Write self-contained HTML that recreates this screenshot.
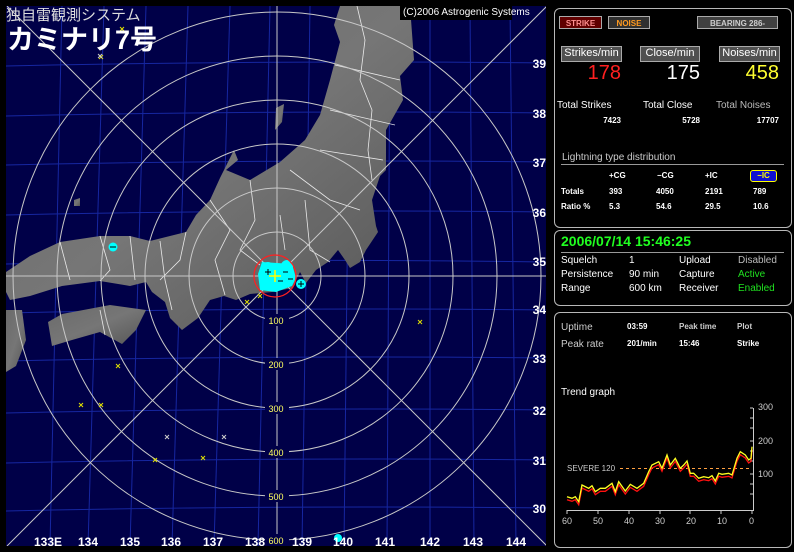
<!DOCTYPE html>
<html><head><meta charset="utf-8"><style>
*{margin:0;padding:0;box-sizing:border-box}
body{width:794px;height:552px;background:#000;position:relative;overflow:hidden;font-family:"Liberation Sans","Noto Sans CJK JP",sans-serif;color:#fff}
.a{position:absolute;white-space:nowrap}
.panel{position:absolute;border:1px solid #b8b8b8;border-radius:6px}
.btn{position:absolute;font-size:11px;text-align:center;line-height:13px;border:1px solid #aaa}
.s{font-size:10px}
.m{font-size:8px;font-weight:bold}
</style></head><body>
<svg class="a" style="left:0;top:0" width="552" height="552" viewBox="0 0 552 552">
<defs><clipPath id="c"><rect x="6" y="6" width="540" height="540"/></clipPath>
<linearGradient id="g" x1="0" y1="0" x2="1" y2="1"><stop offset="0" stop-color="#6a6a6a"/><stop offset="0.5" stop-color="#767676"/><stop offset="1" stop-color="#555"/></linearGradient></defs>
<rect x="6" y="6" width="540" height="540" fill="#000048"/>
<g clip-path="url(#c)">
<g stroke="#1626a0" stroke-width="1" fill="none">
<path d="M6 66 Q276 60 546 63"/><path d="M6 116 Q276 110 546 113"/><path d="M6 165 Q276 159 546 162"/><path d="M6 215 Q276 209 546 212"/><path d="M6 264 Q276 258 546 262"/><path d="M6 313 Q276 307 546 310"/><path d="M6 361 Q276 355 546 358"/><path d="M6 413 Q276 407 546 410"/><path d="M6 463 Q276 457 546 460"/><path d="M6 511 Q276 505 546 508"/>
<path d="M62 6 L50 546"/><path d="M104 6 L88 546"/><path d="M146 6 L130 546"/><path d="M188 6 L172 546"/><path d="M230 6 L214 546"/><path d="M270 6 L258 546"/><path d="M310 6 L302 546"/><path d="M350 6 L344 546"/><path d="M390 6 L387 546"/><path d="M430 6 L430 546"/><path d="M470 6 L474 546"/><path d="M510 6 L516 546"/>
</g>
<g fill="url(#g)">
<path d="M340 6 L410 6 L414 60 L400 76 L403 100 L386 130 L386 170 L380 176 L372 200 L376 226 L378 232 L366 250 L360 262 L350 268 L345 260 L338 250 L328 262 L316 270 L306 283 L300 272 L292 288 L272 292 L250 294 L236 300 L224 296 L210 300 L198 318 L182 330 L170 318 L165 302 L152 292 L146 282 L130 286 L100 281 L62 286 L30 296 L10 300 L6 292 L6 272 L30 256 L60 242 L100 236 L130 236 L150 241 L186 232 L196 215 L210 200 L220 178 L234 150 L238 160 L226 170 L250 180 L280 162 L305 140 L320 115 L330 80 L340 42 L334 25 Z"/>
<path d="M48 322 L62 314 L110 305 L146 310 L136 330 L122 344 L100 332 L72 340 L52 346 Z"/>
<path d="M6 310 L22 310 L26 340 L16 366 L6 372 Z"/>
<path d="M276 108 L284 104 L282 122 L275 130 Z"/>
<path d="M74 200 L80 198 L80 206 L74 206 Z"/>
</g>
<g stroke="#fff" stroke-width="0.8" fill="none" opacity="0.85">
<path d="M357 6 L365 40 L360 80 L372 110 L368 150 L372 180"/><path d="M335 65 L400 80"/><path d="M330 110 L395 125"/><path d="M320 150 L383 160"/><path d="M290 170 L330 200 L360 210"/><path d="M250 180 L255 220 L240 250 L260 265"/><path d="M210 200 L230 230 L215 260 L225 295"/><path d="M186 232 L180 260 L160 280"/><path d="M160 241 L165 280 L172 310"/><path d="M100 236 L110 270 L100 281"/><path d="M60 242 L70 280"/><path d="M305 200 L310 250 L330 262"/><path d="M280 215 L285 250"/><path d="M100 310 L105 335"/><path d="M130 236 L135 280"/></g>
<g stroke="#c8c8c8" stroke-width="1" fill="none">
<line x1="6" y1="276" x2="546" y2="276"/><line x1="277" y1="6" x2="277" y2="546"/>
<line x1="7" y1="546" x2="547" y2="6"/><line x1="7" y1="6" x2="547" y2="546"/>
<circle cx="277" cy="276" r="44"/><circle cx="277" cy="276" r="88"/><circle cx="277" cy="276" r="132"/><circle cx="277" cy="276" r="176"/><circle cx="277" cy="276" r="220"/><circle cx="277" cy="276" r="264"/>
</g>
<g fill="#000048"><rect x="265" y="314" width="24" height="12"/><rect x="265" y="358" width="24" height="12"/><rect x="265" y="402" width="24" height="12"/><rect x="265" y="446" width="24" height="12"/><rect x="265" y="490" width="24" height="12"/><rect x="265" y="534" width="24" height="12"/></g>
<g fill="#ffff60" font-size="9" font-family="Liberation Sans" text-anchor="middle"><text x="276" y="324">100</text><text x="276" y="368">200</text><text x="276" y="412">300</text><text x="276" y="456">400</text><text x="276" y="500">500</text><text x="276" y="544">600</text></g>
<path d="M262 262 L292 264 L296 278 L292 286 L276 292 L260 290 L258 274 Z" fill="#00ffff"/>
<circle cx="268" cy="268" r="6" fill="#00ffff"/><circle cx="287" cy="266" r="6" fill="#00ffff"/>
<circle cx="301" cy="284" r="5" fill="#00ffff"/><circle cx="113" cy="247" r="4.5" fill="#00ffff"/><circle cx="338" cy="538" r="4" fill="#00ffff"/>
<circle cx="275" cy="276" r="21" fill="none" stroke="#ff2020" stroke-width="1.2"/>
<g stroke="#000" stroke-width="1"><path d="M265 272 h6 M268 269 v6 M298 284 h6 M301 281 v6 M110 247 h6 M283 272 h5 M278 281 h5 M288 279 h5"/></g>
<path d="M269 276 h12 M275 270 v12" stroke="#ffff00" stroke-width="1.5"/>
<g stroke="#e0e000" stroke-width="1"><path d="M120 27 l4 4 m0 -4 l-4 4 M99 55 l4 4 m0 -4 l-4 4 M245 300 l4 4 m0 -4 l-4 4 M258 294 l4 4 m0 -4 l-4 4 M418 320 l4 4 m0 -4 l-4 4 M116 364 l4 4 m0 -4 l-4 4 M79 403 l4 4 m0 -4 l-4 4 M99 403 l4 4 m0 -4 l-4 4 M153 458 l4 4 m0 -4 l-4 4 M201 456 l4 4 m0 -4 l-4 4"/></g>
<g stroke="#ccc" stroke-width="1"><path d="M165 435 l4 4 m0 -4 l-4 4 M222 435 l4 4 m0 -4 l-4 4 M98 54 l4 4 m0 -4 l-4 4"/></g>
</g>
<g fill="#fff" font-size="12" font-weight="bold" font-family="Liberation Sans">
<text x="34" y="546">133E</text><text x="78" y="546">134</text><text x="120" y="546">135</text><text x="161" y="546">136</text><text x="203" y="546">137</text><text x="245" y="546">138</text><text x="292" y="546">139</text><text x="333" y="546">140</text><text x="375" y="546">141</text><text x="420" y="546">142</text><text x="463" y="546">143</text><text x="506" y="546">144</text>
<g text-anchor="end"><text x="546" y="68">39</text><text x="546" y="118">38</text><text x="546" y="167">37</text><text x="546" y="217">36</text><text x="546" y="266">35</text><text x="546" y="314">34</text><text x="546" y="363">33</text><text x="546" y="415">32</text><text x="546" y="465">31</text><text x="546" y="513">30</text></g>
</g>
</svg>
<div class="a" style="left:6px;top:4px;font-size:15px;color:#ddd;letter-spacing:0px">独自雷観測システム</div>
<div class="a" style="left:7px;top:18px;font-size:27px;font-weight:bold;color:#fff">カミナリ7号</div>
<div class="a" style="left:400px;top:6px;width:112px;height:14px;background:#000;font-size:10px;line-height:14px;padding-left:3px">(C)2006 Astrogenic Systems</div>

<div class="panel" style="left:554px;top:8px;width:238px;height:220px"></div>
<div class="btn m" style="left:559px;top:16px;width:43px;height:13px;background:#600000;color:#ff9090">STRIKE</div>
<div class="btn m" style="left:608px;top:16px;width:42px;height:13px;background:#303030;color:#ff9a20">NOISE</div>
<div class="btn m" style="left:697px;top:16px;width:81px;height:13px;background:#404040;color:#ccc">BEARING 286-</div>
<div class="btn" style="left:561px;top:46px;width:61px;height:16px;background:#505050">Strikes/min</div>
<div class="btn" style="left:640px;top:46px;width:60px;height:16px;background:#505050">Close/min</div>
<div class="btn" style="left:719px;top:46px;width:61px;height:16px;background:#505050">Noises/min</div>
<div class="a" style="left:561px;width:60px;top:62px;font-size:20px;color:#ff2020;text-align:right">178</div>
<div class="a" style="left:640px;width:60px;top:62px;font-size:20px;color:#fff;text-align:right">175</div>
<div class="a" style="left:719px;width:60px;top:62px;font-size:20px;color:#ffff30;text-align:right">458</div>
<div class="a s" style="left:557px;top:100px">Total Strikes</div>
<div class="a s" style="left:643px;top:100px">Total Close</div>
<div class="a s" style="left:716px;top:100px;color:#bbb">Total Noises</div>
<div class="a m" style="left:561px;width:60px;text-align:right;top:116px">7423</div>
<div class="a m" style="left:640px;width:60px;text-align:right;top:116px">5728</div>
<div class="a m" style="left:719px;width:60px;text-align:right;top:116px">17707</div>
<div class="a s" style="left:562px;top:152px;color:#ccc">Lightning type distribution</div>
<div class="a" style="left:561px;top:164px;width:223px;height:1px;background:#999"></div>
<div class="a m" style="left:609px;top:171px">+CG</div><div class="a m" style="left:657px;top:171px">−CG</div><div class="a m" style="left:705px;top:171px">+IC</div>
<div class="a m" style="left:750px;top:170px;width:27px;height:12px;background:#1010d0;border:1px solid #ff0;border-radius:3px;color:#ff0;text-align:center;line-height:10px">−IC</div>
<div class="a m" style="left:561px;top:187px">Totals</div><div class="a m" style="left:609px;top:187px">393</div><div class="a m" style="left:656px;top:187px">4050</div><div class="a m" style="left:705px;top:187px">2191</div><div class="a m" style="left:753px;top:187px">789</div>
<div class="a m" style="left:561px;top:202px">Ratio %</div><div class="a m" style="left:609px;top:202px">5.3</div><div class="a m" style="left:656px;top:202px">54.6</div><div class="a m" style="left:705px;top:202px">29.5</div><div class="a m" style="left:753px;top:202px">10.6</div>

<div class="panel" style="left:554px;top:230px;width:238px;height:76px"></div>
<div class="a" style="left:561px;top:233px;font-size:14px;font-weight:bold;color:#20ff20">2006/07/14 15:46:25</div>
<div class="a" style="left:561px;top:252px;width:223px;height:1px;background:#999"></div>
<div class="a s" style="left:561px;top:255px">Squelch</div><div class="a s" style="left:629px;top:255px">1</div><div class="a s" style="left:679px;top:255px">Upload</div><div class="a s" style="left:738px;top:255px;color:#bbb">Disabled</div>
<div class="a s" style="left:561px;top:269px">Persistence</div><div class="a s" style="left:629px;top:269px">90 min</div><div class="a s" style="left:679px;top:269px">Capture</div><div class="a s" style="left:738px;top:269px;color:#20e020">Active</div>
<div class="a s" style="left:561px;top:283px">Range</div><div class="a s" style="left:629px;top:283px">600 km</div><div class="a s" style="left:679px;top:283px">Receiver</div><div class="a s" style="left:738px;top:283px;color:#20e020">Enabled</div>

<div class="panel" style="left:554px;top:312px;width:238px;height:236px"></div>
<div class="a s" style="left:561px;top:322px;color:#ccc">Uptime</div><div class="a m" style="left:627px;top:322px">03:59</div><div class="a m" style="left:679px;top:322px;color:#ccc">Peak time</div><div class="a m" style="left:737px;top:322px;color:#ccc">Plot</div>
<div class="a s" style="left:561px;top:339px;color:#ccc">Peak rate</div><div class="a m" style="left:627px;top:339px">201/min</div><div class="a m" style="left:679px;top:339px">15:46</div><div class="a m" style="left:737px;top:339px">Strike</div>
<div class="a s" style="left:561px;top:387px">Trend graph</div>
<svg class="a" style="left:552px;top:395px" width="242" height="135" viewBox="552 395 242 135">
<g stroke="#ccc" stroke-width="1" fill="none">
<path d="M567 510.5 H753 M753.5 408 V511"/>
<path d="M567 510v4 M598 510v4 M629 510v4 M660 510v4 M690 510v4 M721 510v4 M752 510v4"/>
<path d="M753 408h-3 M753 418h-3 M753 428h-3 M753 441h-3 M753 451h-3 M753 461h-3 M753 474h-3 M753 484h-3 M753 494h-3"/>
</g>
<line x1="620" y1="468.5" x2="752" y2="468.5" stroke="#ffa040" stroke-dasharray="3,3"/>
<text x="567" y="471" font-size="8" fill="#ccc" font-family="Liberation Sans">SEVERE 120</text>
<polyline fill="none" stroke="#ff1010" stroke-width="1.3" transform="translate(0,3)" points="567,496.7 572,498.3 575.3,496.7 578.7,501.7 582,485 588.7,488.3 592,485.7 595.3,491.7 600.3,488.3 605.3,488.3 612,483.3 615.3,491.7 618.7,481.7 625.3,491 630.3,484.3 637,488.3 643.7,483.3 648.7,471.7 652,465 658.7,461.7 662,468.3 667,455 670.3,465 675.3,458.3 680.3,468.3 683.7,465 687,461 690.3,473.3 693.7,473.3 698.7,478.3 703.7,476.7 708.7,477.7 712,475.7 715.3,481 718.7,473.3 722,474.3 728.7,473.3 732,475 737,458.3 740.3,451.7 745.3,455 748.7,460 751,458.3 752,446.7"/>
<polyline fill="none" stroke="#ffff20" stroke-width="1.3" points="567,496.7 572,498.3 575.3,496.7 578.7,501.7 582,485 588.7,488.3 592,485.7 595.3,491.7 600.3,488.3 605.3,488.3 612,483.3 615.3,491.7 618.7,481.7 625.3,491 630.3,484.3 637,488.3 643.7,483.3 648.7,471.7 652,465 658.7,461.7 662,468.3 667,455 670.3,465 675.3,458.3 680.3,468.3 683.7,465 687,461 690.3,473.3 693.7,473.3 698.7,478.3 703.7,476.7 708.7,477.7 712,475.7 715.3,481 718.7,473.3 722,474.3 728.7,473.3 732,475 737,458.3 740.3,451.7 745.3,455 748.7,460 751,458.3 752,446.7"/>
<g fill="#ccc" font-size="9" font-family="Liberation Sans"><text x="758" y="410">300</text><text x="758" y="444">200</text><text x="758" y="477">100</text>
<text x="562" y="524">60</text><text x="593" y="524">50</text><text x="624" y="524">40</text><text x="655" y="524">30</text><text x="686" y="524">20</text><text x="717" y="524">10</text><text x="749" y="524">0</text></g>
</svg>
</body></html>
